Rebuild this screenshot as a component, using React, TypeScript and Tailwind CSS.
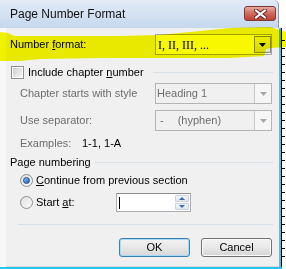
import React from "react";

function Arrow({ color }: { color: string }) {
  return (
    <svg width="7" height="4" viewBox="0 0 7 4">
      <path d="M0 0 H7 L3.5 4 Z" fill={color} />
    </svg>
  );
}

function EnabledCombo() {
  return (
    <div className="flex h-[21px] w-[117px] border border-[#a6a6a6] bg-white">
      <span className="flex flex-1 items-center pl-[2px] font-['Liberation_Serif',serif] text-[12px] text-black">
        I, II, III, ...
      </span>
      <div className="my-[1px] flex w-[17px] items-center justify-center border border-[#8a8a8a] bg-gradient-to-b from-[#f4f4f4] to-[#dcdcdc]">
        <Arrow color="#000" />
      </div>
    </div>
  );
}

function DisabledCombo({ children }: { children: React.ReactNode }) {
  return (
    <div className="flex h-[21px] w-[117px] border border-[#b4b4b4] bg-[#f0f0f0]">
      <span className="flex flex-1 items-center pl-[1px] text-[11px] text-[#6d6d6d]">{children}</span>
      <div className="flex w-[17px] items-center justify-center border-l border-[#c8c8c8] bg-[#f6f6f6]">
        <Arrow color="#a8a8a8" />
      </div>
    </div>
  );
}

function Radio({ checked }: { checked?: boolean }) {
  return (
    <div className="flex h-[13px] w-[13px] items-center justify-center rounded-full border border-[#8e8f8f] bg-gradient-to-br from-[#dcdcdc] to-[#fdfdfd]">
      {checked ? (
        <div className="h-[7px] w-[7px] rounded-full border border-[#1a4f8f] bg-gradient-to-br from-[#8ccaf5] to-[#0f5fb8]" />
      ) : (
        <div className="h-[9px] w-[9px] rounded-full bg-gradient-to-br from-[#e4e4e4] to-[#f8f8f8]" />
      )}
    </div>
  );
}

const ticks = [40, 48, 56, 64, 72, 80, 88, 96, 104, 112, 120, 128, 136, 144, 152, 160, 168, 176, 184, 192, 200, 208, 216, 224, 232, 240, 248, 256];

export default function App() {
  return (
    <div className="relative flex h-[269px] w-[286px] overflow-hidden bg-white font-['Liberation_Sans',Arial,sans-serif] text-[11px] text-black">
      <div className="flex w-[282px] flex-col">
        <div className="flex h-[267px]">
          {/* dialog */}
          <div className="flex w-[279px] flex-col">
            {/* title bar */}
            <div className="flex h-[28px] items-start justify-between rounded-tr-[5px] border-r border-[#8d99a8] bg-gradient-to-b from-[#e2ebf6] to-[#c6d8ee]">
              <span className="pl-[10px] pt-[6px] text-[12px] leading-[16px] text-[#111]">Page Number Format</span>
              <div className="mr-[2px] mt-[6px] flex h-[15px] w-[32px] items-center justify-center rounded-[3px] border border-[#7c3a33] bg-gradient-to-b from-[#e9a99f] via-[#d0685c] to-[#c13f31]">
                <svg width="13" height="10" viewBox="0 0 13 10">
                  <path d="M2 1.5 L11 8.5 M11 1.5 L2 8.5" stroke="#5a2a26" strokeWidth="4" strokeLinecap="square" />
                  <path d="M2 1.5 L11 8.5 M11 1.5 L2 8.5" stroke="#ffffff" strokeWidth="2" strokeLinecap="square" />
                </svg>
              </div>
            </div>
            {/* body */}
            <div className="flex flex-1">
              <div className="w-[6px] bg-[#f7f8fa]" />
              <div className="flex flex-1 flex-col border-b border-[#d6d6d6] bg-[#f0f0f0] pl-[4px] pr-[6px]">
                {/* number format */}
                <div className="mt-[6px] flex h-[21px] items-center">
                  <span className="w-[145px]">
                    Number <span className="underline underline-offset-1">f</span>ormat:
                  </span>
                  <EnabledCombo />
                </div>
                {/* include chapter */}
                <div className="mt-[11px] flex h-[13px] items-center">
                  <div className="flex w-[143px] items-center">
                    <div className="ml-[1px] flex h-[13px] w-[13px] items-center justify-center border border-[#8e8f8f] bg-white">
                      <div className="h-[9px] w-[9px] bg-gradient-to-br from-[#cfcfcf] to-[#f6f6f6]" />
                    </div>
                    <span className="ml-[4px] whitespace-nowrap">
                      Include chapter <span className="underline underline-offset-1">n</span>umber
                    </span>
                  </div>
                  <div className="h-px flex-1 bg-[#d5dfe5]" />
                </div>
                {/* chapter starts */}
                <div className="mt-[4px] flex h-[21px] items-center">
                  <span className="w-[145px] pl-[10px] text-[#6d6d6d]">Chapter starts with style</span>
                  <DisabledCombo>Heading 1</DisabledCombo>
                </div>
                {/* separator */}
                <div className="mt-[6px] flex h-[21px] items-center">
                  <span className="w-[145px] pl-[10px] text-[#6d6d6d]">Use separator:</span>
                  <DisabledCombo>
                    <span className="pl-[3px]">-</span>
                    <span className="pl-[14px]">(hyphen)</span>
                  </DisabledCombo>
                </div>
                {/* examples */}
                <div className="mt-[5px] flex h-[14px] items-center pl-[10px]">
                  <span className="w-[62px] text-[#6d6d6d]">Examples:</span>
                  <span>1-1, 1-A</span>
                </div>
                {/* page numbering */}
                <div className="mt-[5px] flex h-[14px] items-center">
                  <span className="w-[85px] whitespace-nowrap">Page numbering</span>
                  <div className="h-px flex-1 bg-[#d5dfe5]" />
                </div>
                {/* continue */}
                <div className="mt-[5px] flex h-[13px] items-center pl-[10px]">
                  <Radio checked />
                  <span className="ml-[3px]">
                    <span className="underline underline-offset-1">C</span>ontinue from previous section
                  </span>
                </div>
                {/* start at */}
                <div className="mt-[6px] flex h-[19px] items-center pl-[10px]">
                  <Radio />
                  <span className="ml-[3px] w-[80px]">
                    Start <span className="underline underline-offset-1">a</span>t:
                  </span>
                  <div className="flex h-[19px] w-[75px] border border-[#abadb3] border-t-[#8a8c92] bg-white">
                    <div className="flex flex-1 items-center pl-[2px]">
                      <div className="h-[12px] w-px bg-black" />
                    </div>
                    <div className="my-[1px] mr-[1px] flex w-[14px] flex-col gap-px">
                      <div className="flex flex-1 items-center justify-center rounded-[1px] border border-[#c9d3e0] bg-gradient-to-b from-[#f3f6fa] to-[#dfe6ef]">
                        <svg width="6" height="3" viewBox="0 0 6 3"><path d="M0 3 H6 L3 0 Z" fill="#3a68b0" /></svg>
                      </div>
                      <div className="flex flex-1 items-center justify-center rounded-[1px] border border-[#c9d3e0] bg-gradient-to-b from-[#f3f6fa] to-[#dfe6ef]">
                        <svg width="6" height="3" viewBox="0 0 6 3"><path d="M0 0 H6 L3 3 Z" fill="#3a68b0" /></svg>
                      </div>
                    </div>
                  </div>
                </div>
                {/* bottom separator */}
                <div className="ml-[8px] mt-[12px] h-px bg-[#d5dfe5]" />
                {/* buttons */}
                <div className="mr-[1px] mt-[13px] flex h-[19px] justify-end gap-[11px]">
                  <button className="flex w-[71px] items-center justify-center rounded-[3px] border border-[#3c7fb1] bg-gradient-to-b from-[#f2f2f2] via-[#e8e8e8] to-[#d6d6d6] text-[11px] shadow-[inset_0_0_0_1px_#a8dcf6]">
                    OK
                  </button>
                  <button className="flex w-[71px] items-center justify-center rounded-[3px] border border-[#707070] bg-gradient-to-b from-[#f2f2f2] via-[#e8e8e8] to-[#d4d4d4] text-[11px] shadow-[inset_0_0_0_1px_#fbfbfb]">
                    Cancel
                  </button>
                </div>
              </div>
            </div>
          </div>
          {/* right edge */}
          <div className="flex w-[3px] flex-col">
            <div className="h-[28px] bg-white" />
            <div className="flex flex-1">
              <div className="w-[2px] bg-[#5cbbe9]" />
              <div className="w-px bg-black" />
            </div>
          </div>
        </div>
        <div className="h-[2px] bg-[#27c6ef]" />
      </div>
      {/* ruler behind */}
      <div className="relative flex-1 bg-white">
        {ticks.map((t) => (
          <div key={t} className="absolute left-0 h-px w-[3px] bg-black" style={{ top: t }} />
        ))}
      </div>
      {/* yellow highlighter stroke */}
      <svg
        className="pointer-events-none absolute left-0 top-0 mix-blend-multiply"
        width="286"
        height="269"
        viewBox="0 0 286 269"
      >
        <path
          d="M0 32 L8 33 L14 36 L120 36 L160 35 L200 31 L230 28 L270 27 L280 30 L286 32 L286 47 L271 48 L266 49 L264 56 L230 58 L100 58 L40 59 L20 61 L0 61 Z"
          fill="#f8f800"
        />
      </svg>
    </div>
  );
}
